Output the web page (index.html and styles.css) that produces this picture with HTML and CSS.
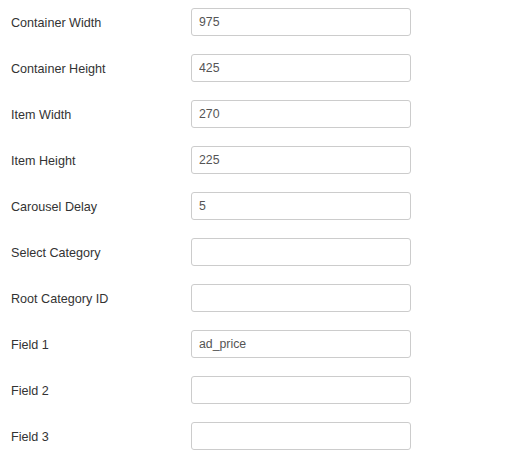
FILE: index.html
```html
<!DOCTYPE html>
<html>
<head>
<meta charset="utf-8">
<link rel="stylesheet" href="styles.css">
</head>
<body>
<form class="form">
  <div class="row"><label class="label">Container Width</label><input class="field" type="text" value="975"></div>
  <div class="row"><label class="label">Container Height</label><input class="field" type="text" value="425"></div>
  <div class="row"><label class="label">Item Width</label><input class="field" type="text" value="270"></div>
  <div class="row"><label class="label">Item Height</label><input class="field" type="text" value="225"></div>
  <div class="row"><label class="label">Carousel Delay</label><input class="field" type="text" value="5"></div>
  <div class="row"><label class="label">Select Category</label><input class="field" type="text" value=""></div>
  <div class="row"><label class="label">Root Category ID</label><input class="field" type="text" value=""></div>
  <div class="row"><label class="label">Field 1</label><input class="field" type="text" value="ad_price"></div>
  <div class="row"><label class="label">Field 2</label><input class="field" type="text" value=""></div>
  <div class="row"><label class="label">Field 3</label><input class="field" type="text" value=""></div>
</form>
</body>
</html>
```
FILE: styles.css
```css
html, body {
  margin: 0;
  padding: 0;
  background: #fff;
}
body {
  font-family: "Liberation Sans", Arial, sans-serif;
  font-size: 12px;
  color: #333;
}
.form {
  display: flex;
  flex-direction: column;
  gap: 18px;
  padding: 8px 0 0 11px;
}
.row {
  display: grid;
  grid-template-columns: 180px 220px;
  align-items: center;
  height: 28px;
}
.label {
  padding-top: 2px;
  font-size: 12.6px;
  color: #333;
}
.field {
  box-sizing: border-box;
  width: 220px;
  height: 28px;
  margin: 0;
  padding: 0 7px;
  border: 1px solid #ccc;
  border-radius: 3px;
  font-family: "Liberation Sans", Arial, sans-serif;
  font-size: 12.3px;
  color: #555;
  background: #fff;
  outline: none;
}
```
